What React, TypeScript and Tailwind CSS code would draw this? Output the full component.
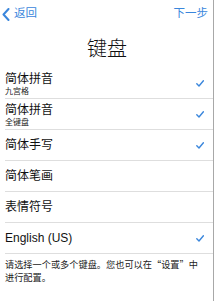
import React from "react";

const font = { fontFamily: '"Liberation Sans", "Noto Sans CJK SC", sans-serif' };
const cjk = { fontFamily: '"Noto Sans CJK SC", sans-serif' };

function Check() {
  return (
    <svg width="8" height="7" viewBox="0 0 8 7" className="shrink-0">
      <polyline points="0.8,3.8 3,6 7.4,0.8" fill="none" stroke="#3a86dc" strokeWidth="1.4" strokeLinecap="round" strokeLinejoin="round" />
    </svg>
  );
}

const rows: { title: string; sub?: string; checked: boolean }[] = [
  { title: "简体拼音", sub: "九宫格", checked: true },
  { title: "简体拼音", sub: "全键盘", checked: true },
  { title: "简体手写", checked: true },
  { title: "简体笔画", checked: false },
  { title: "表情符号", checked: false },
  { title: "English (US)", checked: true },
];

export default function App() {
  return (
    <div className="w-[217px] h-[301px] bg-white flex overflow-hidden" style={font}>
      <div className="w-[214px] h-full border-r border-[#a8a8a8] flex flex-col">
        <div className="h-[28px] flex items-center justify-between pl-[2px] pr-[5px] text-[#3a86dc]">
          <div className="flex items-center gap-[4px]">
            <svg width="8" height="13" viewBox="0 0 8 13">
              <polyline points="6.5,1 1.5,6.5 6.5,12" fill="none" stroke="#3a86dc" strokeWidth="2" strokeLinecap="round" strokeLinejoin="round" />
            </svg>
            <span className="text-[11.5px] leading-none">返回</span>
          </div>
          <span className="text-[11.5px] leading-none">下一步</span>
        </div>
        <div className="h-[40px] flex items-center justify-center">
          <span className="text-[20px] leading-none font-light text-[#111] pl-[1px]" style={cjk}>键盘</span>
        </div>
        <div className="flex flex-col">
          {rows.map((r, i) => (
            <div key={i} className="h-[31px] ml-[5px] border-b border-[#dedede] flex items-center justify-between pr-[9px]">
              {r.sub ? (
                <div className="flex flex-col pt-[1px]">
                  <span className="text-[12px] leading-[16px] text-[#111]">{r.title}</span>
                  <span className="text-[8px] leading-[9px] text-[#222]">{r.sub}</span>
                </div>
              ) : (
                <span className="text-[12px] leading-none text-[#111]">{r.title}</span>
              )}
              {r.checked && <Check />}
            </div>
          ))}
        </div>
        <div className="pl-[5px] pr-[2px] pt-[4px] text-[9.2px] leading-[13px] text-[#222]" style={cjk}>
          请选择一个或多个键盘。您也可以在“设置”中
          <br />
          进行配置。
        </div>
      </div>
      <div className="flex-1 bg-white" />
    </div>
  );
}
